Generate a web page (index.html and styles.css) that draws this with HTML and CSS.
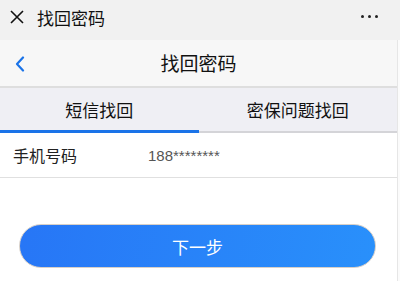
FILE: index.html
```html
<!DOCTYPE html>
<html lang="zh">
<head>
<meta charset="utf-8">
<link rel="stylesheet" href="styles.css">
</head>
<body>
<div class="topbar">
  <svg class="close" width="14" height="14" viewBox="0 0 14 14"><path d="M1 1L13 13M13 1L1 13" stroke="#111" stroke-width="1.6" fill="none"/></svg>
  <span class="top-title">找回密码</span>
  <span class="dots"><i></i><i></i><i></i></span>
</div>
<div class="page">
  <div class="navbar">
    <svg class="back" width="10" height="16" viewBox="0 0 10 16"><path d="M8 1.5L2 8L8 14.5" stroke="#1a73e8" stroke-width="2.2" fill="none" stroke-linecap="round" stroke-linejoin="round"/></svg>
    <span class="nav-title">找回密码</span>
  </div>
  <div class="tabs">
    <div class="tab active">短信找回</div>
    <div class="tab">密保问题找回</div>
  </div>
  <div class="row">
    <span class="label">手机号码</span>
    <span class="value">188********</span>
  </div>
  <div class="actions">
    <button class="next">下一步</button>
  </div>
</div>
</body>
</html>
```

FILE: styles.css
```css
* { box-sizing: border-box; }
html, body { margin: 0; padding: 0; }
body {
  width: 400px;
  height: 281px;
  overflow: hidden;
  background: #fbfbfb;
  font-family: "Noto Sans CJK SC", "Noto Sans", sans-serif;
  color: #111;
}
.topbar {
  height: 40px;
  background: #f1f1f1;
  display: flex;
  align-items: center;
  padding-left: 10px;
  padding-right: 22px;
}
.close { flex: none; margin-top: -6px; }
.top-title {
  font-size: 17px;
  margin-left: 13px;
  margin-top: -6px;
  flex: 1;
}
.dots { display: flex; gap: 4px; margin-top: -8px; }
.dots i { width: 3px; height: 3px; border-radius: 50%; background: #222; display: block; }
.page {
  width: 398px;
  border-right: 1px solid #e6e6e6;
  background: #fff;
  height: 241px;
}
.navbar {
  height: 48px;
  background: #f7f7f7;
  position: relative;
  display: flex;
  align-items: center;
  justify-content: center;
  border-bottom: 2px solid #dedede;
}
.back { position: absolute; left: 15px; top: 16px; }
.nav-title { font-size: 19px; margin-top: -2px; }
.tabs {
  display: flex;
  height: 45px;
  background: #efeff4;
  border-bottom: 2px solid #d4d4d8;
}
.tab {
  flex: 1;
  display: flex;
  align-items: center;
  justify-content: center;
  font-size: 17px;
  padding-top: 0;
  margin-bottom: -2px;
  border-bottom: 3px solid transparent;
}
.tab.active { border-bottom-color: #1a73e8; }
.row {
  height: 45px;
  display: flex;
  align-items: center;
  padding-left: 13px;
  border-bottom: 1px solid #e0e0e0;
  font-size: 16px;
}
.label { width: 135px; color: #222; }
.value { color: #555; font-size: 15px; font-family: "Liberation Sans", "Noto Sans CJK SC", sans-serif; }
.actions { padding: 46px 22px 0 19px; }
.next {
  width: 357px;
  height: 44px;
  border-radius: 22px;
  border: 1px solid #d8d0c8;
  background: linear-gradient(100deg, #2776f6, #2990fb);
  color: #fff;
  font-family: "Noto Sans CJK SC", sans-serif;
  font-size: 17px;
  display: block;
  padding: 0;
}
```
